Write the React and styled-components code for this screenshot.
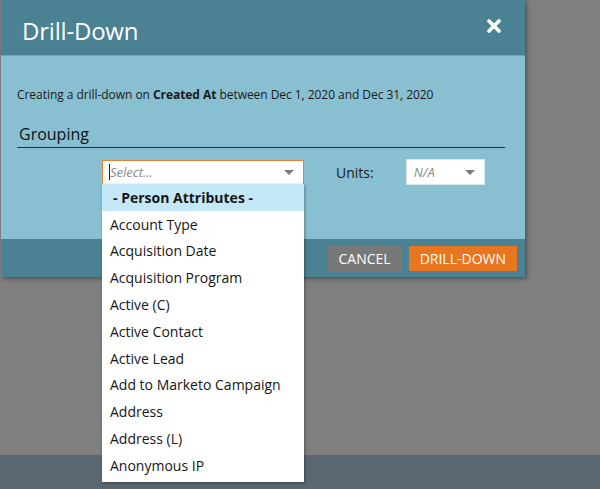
import React from "react";
import styled, { createGlobalStyle } from "styled-components";

const Global = createGlobalStyle`
  html, body { margin: 0; padding: 0; }
  body {
    background: #7f7f7f;
    font-family: "Open Sans", "Liberation Sans", sans-serif;
    width: 600px;
    height: 489px;
    overflow: hidden;
  }
`;

const Page = styled.div`
  position: relative;
  width: 600px;
  height: 489px;
  display: flex;
  flex-direction: column;
`;

const Backdrop = styled.div`
  flex: 1;
  padding-left: 1px;
`;

const BottomStrip = styled.div`
  height: 34px;
  background: #5b6770;
`;

const Dialog = styled.div`
  width: 524px;
  background: #88c0d1;
  box-shadow: 2px 2px 4px rgba(0, 0, 0, 0.35);
  display: flex;
  flex-direction: column;
`;

const Header = styled.div`
  height: 56px;
  background: #4a8193;
  border-bottom: 1px solid #6ea6b8;
  display: flex;
  align-items: center;
  justify-content: space-between;
  padding: 0 24px 0 21px;
  box-sizing: border-box;
`;

const Title = styled.div`
  color: #fff;
  font-size: 24px;
  margin-top: 6px;
  letter-spacing: -0.2px;
`;

const CloseBtn = styled.div`
  width: 14px;
  height: 14px;
  margin-top: -3px;
  display: flex;
`;

const Body = styled.div`
  height: 183px;
  padding: 30px 20px 0 16px;
  box-sizing: border-box;
  position: relative;
`;

const Intro = styled.div`
  font-size: 12px;
  color: #1b1b1b;
  letter-spacing: -0.05px;
  b { font-weight: 700; }
`;

const Section = styled.div`
  margin-top: 20px;
  font-size: 16px;
  color: #111;
  padding: 0 0 2px 2px;
  border-bottom: 1px solid #1e3540;
  line-height: 22px;
`;

const FieldRow = styled.div`
  display: flex;
  align-items: center;
  margin-top: 11px;
  padding-left: 85px;
`;

const SelectBox = styled.div`
  position: relative;
  width: ${(p) => p.$w}px;
  height: ${(p) => p.$h}px;
  background: #fff;
  border: 1px solid ${(p) => (p.$focus ? "#e8822e" : "#d7e6ea")};
  box-sizing: border-box;
  display: flex;
  align-items: center;
  justify-content: space-between;
  padding: 0 9px 0 ${(p) => p.$pl}px;
  font-size: 13px;
  font-style: italic;
  color: #8a8a8a;
`;

const Caret = styled.span`
  display: inline-block;
  width: 1px;
  height: 16px;
  background: #222;
`;

const Placeholder = styled.span`
  display: flex;
  align-items: center;
`;

const Arrow = styled.span`
  width: 0;
  height: 0;
  border-left: 5px solid transparent;
  border-right: 5px solid transparent;
  border-top: 5px solid #7a7a7a;
`;

const UnitsLabel = styled.div`
  font-size: 14px;
  color: #1b1b1b;
  margin: 0 32px 0 32px;
`;

const Footer = styled.div`
  height: 38px;
  background: #4a8193;
  display: flex;
  align-items: center;
  justify-content: flex-end;
  gap: 7px;
  padding-right: 8px;
`;

const Button = styled.div`
  height: 25px;
  padding: 0 ${(p) => p.$px}px;
  background: ${(p) => p.$bg};
  color: #fff;
  font-size: 14px;
  display: flex;
  align-items: center;
`;

const Menu = styled.div`
  position: absolute;
  left: 102px;
  top: 184px;
  width: 202px;
  background: #fff;
  box-shadow: 1px 1px 3px rgba(0, 0, 0, 0.35);
  display: flex;
  flex-direction: column;
  padding-bottom: 3px;
`;

const MenuItem = styled.div`
  height: 26.8px;
  display: flex;
  align-items: center;
  padding-left: ${(p) => (p.$group ? 11 : 8)}px;
  font-size: 14px;
  color: #161616;
  font-weight: ${(p) => (p.$group ? 700 : 400)};
  background: ${(p) => (p.$group ? "#c5e8f8" : "#fff")};
  white-space: nowrap;
`;

const items = [
  "Account Type",
  "Acquisition Date",
  "Acquisition Program",
  "Active (C)",
  "Active Contact",
  "Active Lead",
  "Add to Marketo Campaign",
  "Address",
  "Address (L)",
  "Anonymous IP",
];

export default function App() {
  return (
    <>
      <Global />
      <Page>
        <Backdrop>
          <Dialog>
            <Header>
              <Title>Drill-Down</Title>
              <CloseBtn>
                <svg width="14" height="14" viewBox="0 0 14 14">
                  <path
                    d="M2 2 L12 12 M12 2 L2 12"
                    stroke="#fff"
                    strokeWidth="3.6"
                    strokeLinecap="round"
                  />
                </svg>
              </CloseBtn>
            </Header>
            <Body>
              <Intro>
                Creating a drill-down on <b>Created At</b> between Dec 1, 2020
                and Dec 31, 2020
              </Intro>
              <Section>Grouping</Section>
              <FieldRow>
                <SelectBox $w={202} $h={25} $pl={6} $focus>
                  <Placeholder>
                    <Caret />
                    Select...
                  </Placeholder>
                  <Arrow />
                </SelectBox>
                <UnitsLabel>Units:</UnitsLabel>
                <SelectBox $w={79} $h={26} $pl={7}>
                  <span>N/A</span>
                  <Arrow />
                </SelectBox>
              </FieldRow>
            </Body>
            <Footer>
              <Button $bg="#787878" $px={11}>CANCEL</Button>
              <Button $bg="#e8761e" $px={11}>DRILL-DOWN</Button>
            </Footer>
          </Dialog>
        </Backdrop>
        <BottomStrip />
        <Menu>
          <MenuItem $group>- Person Attributes -</MenuItem>
          {items.map((t) => (
            <MenuItem key={t}>{t}</MenuItem>
          ))}
        </Menu>
      </Page>
    </>
  );
}
